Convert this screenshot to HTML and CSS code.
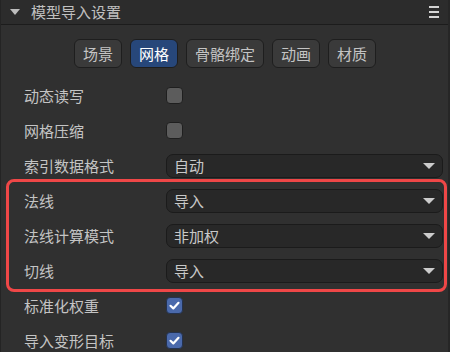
FILE: index.html
```html
<!DOCTYPE html>
<html lang="zh">
<head>
<meta charset="utf-8">
<link rel="stylesheet" href="styles.css">
</head>
<body>
<div class="panel">
  <div class="header">
    <span class="caret"></span>
    <span class="title">模型导入设置</span>
    <span class="menu"><i></i><i></i><i></i></span>
  </div>
  <div class="content">
    <div class="tabs">
      <span class="tab">场景</span>
      <span class="tab active">网格</span>
      <span class="tab">骨骼绑定</span>
      <span class="tab">动画</span>
      <span class="tab">材质</span>
    </div>
    <div class="row"><span class="label">动态读写</span><span class="check"></span></div>
    <div class="row"><span class="label">网格压缩</span><span class="check"></span></div>
    <div class="row"><span class="label">索引数据格式</span><span class="select">自动<span class="arrow"></span></span></div>
    <div class="group">
      <div class="row"><span class="label">法线</span><span class="select">导入<span class="arrow"></span></span></div>
      <div class="row"><span class="label">法线计算模式</span><span class="select">非加权<span class="arrow"></span></span></div>
      <div class="row"><span class="label">切线</span><span class="select">导入<span class="arrow"></span></span></div>
    </div>
    <div class="row"><span class="label">标准化权重</span><span class="check on"><svg viewBox="0 0 17 17" width="17" height="17"><path d="M4.5 8.8 L7.3 11.4 L12.5 5.8" fill="none" stroke="#fff" stroke-width="2.2" stroke-linecap="round" stroke-linejoin="round"/></svg></span></div>
    <div class="row"><span class="label">导入变形目标</span><span class="check on"><svg viewBox="0 0 17 17" width="17" height="17"><path d="M4.5 8.8 L7.3 11.4 L12.5 5.8" fill="none" stroke="#fff" stroke-width="2.2" stroke-linecap="round" stroke-linejoin="round"/></svg></span></div>
  </div>
</div>
</body>
</html>
```

FILE: styles.css
```css
html, body {
  margin: 0;
  padding: 0;
  background: #303030;
}
body {
  font-family: "Noto Sans CJK SC", "Noto Sans", sans-serif;
  font-size: 15px;
  color: #c4c4c4;
}
.panel {
  width: 450px;
  height: 352px;
  box-sizing: border-box;
  border-left: 1px solid #242424;
  border-right: 2px solid #262626;
  background: #303030;
  overflow: hidden;
}
.header {
  height: 24px;
  background: #2c2c2c;
  border-bottom: 1px solid #1c1c1c;
  display: flex;
  align-items: center;
}
.caret {
  width: 0;
  height: 0;
  margin-left: 9px;
  border-left: 5.5px solid transparent;
  border-right: 5.5px solid transparent;
  border-top: 6px solid #bdbdbd;
}
.title {
  margin-left: 11px;
  line-height: 24px;
  color: #c0c0c0;
}
.menu {
  margin-left: auto;
  margin-right: 9px;
  width: 10px;
  display: flex;
  flex-direction: column;
  gap: 3px;
}
.menu i {
  display: block;
  height: 2px;
  background: #d4d4d4;
}
.content {
  padding-top: 14px;
}
.tabs {
  display: flex;
  justify-content: center;
  gap: 8px;
  margin-left: 1px;
  margin-bottom: 10px;
}
.tab {
  height: 29px;
  box-sizing: border-box;
  padding: 0 8px;
  border: 1px solid #1e1e1e;
  border-radius: 6px;
  background: #3a3a3a;
  display: flex;
  align-items: center;
  color: #c4c4c4;
}
.tab.active {
  background: #27477a;
  color: #ffffff;
}
.row {
  height: 35px;
  display: flex;
  align-items: center;
  padding-left: 23px;
  padding-right: 5px;
}
.label {
  width: 142px;
  flex: none;
}
.check {
  width: 17px;
  height: 17px;
  box-sizing: border-box;
  border: 1px solid #1f1f1f;
  border-radius: 4px;
  background: #5c5c5c;
  position: relative;
}
.check.on {
  background: #4a69ab;
  border-color: #24324e;
}
.check svg {
  position: absolute;
  left: -1px;
  top: -1px;
}
.select {
  flex: 1;
  height: 24px;
  box-sizing: border-box;
  border: 1px solid #1b1b1b;
  border-radius: 7px;
  background: #282828;
  display: flex;
  align-items: center;
  padding-left: 7px;
  color: #c8c8c8;
}
.arrow {
  margin-left: auto;
  margin-right: 7px;
  width: 0;
  height: 0;
  border-left: 6px solid transparent;
  border-right: 6px solid transparent;
  border-top: 6px solid #cccccc;
}
.group {
  margin: -4px 1px -4px 5px;
  border: 3px solid #ef4747;
  border-radius: 8px;
  padding: 1px 0;
}
.group .row {
  padding-left: 15px;
  padding-right: 1px;
}
```
